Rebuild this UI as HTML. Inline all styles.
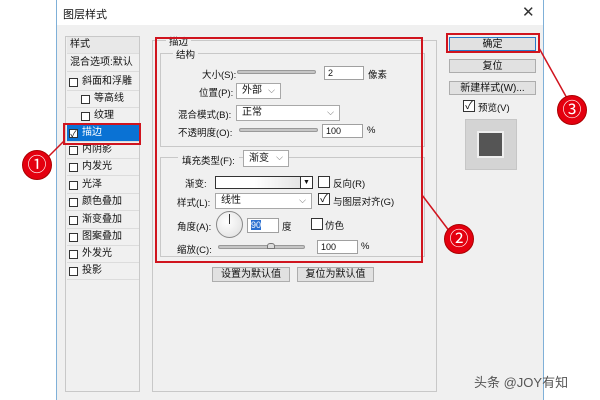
<!DOCTYPE html>
<html><head><meta charset="utf-8"><style>
*{box-sizing:border-box;margin:0;padding:0}
body{width:600px;height:400px;background:#fff;position:relative;overflow:hidden;font-family:"Liberation Sans","Noto Sans CJK SC",sans-serif;font-size:10px;color:#111}
.a{position:absolute}
.dlg{left:56px;top:0;width:488px;height:400px;background:#f0f0f0;border-left:1px solid #7fb0d8;border-right:1px solid #7fb0d8}
.tb{left:57px;top:0;width:486px;height:25px;background:#fff}
.box{position:absolute;border:1px solid #c8c8c8}
.inp{position:absolute;background:#fff;border:1px solid #a0a0a0;padding-left:3px;line-height:12px;font-size:9px}
.sel{position:absolute;background:#fff;border:1px solid #a8a8a8;padding-left:5px;font-size:10px}
.sel:after{content:"⌵";position:absolute;right:5px;top:-1px;color:#666;font-size:9px}
.btn{position:absolute;background:#e1e1e1;border:1px solid #adadad;text-align:center;font-size:10px;line-height:13px}
.cb{position:absolute;width:10px;height:10px;border:1px solid #333;background:#fff;font-size:9px;line-height:8px;text-align:center}
.li{position:absolute;left:67px;width:72px;height:17px;border-bottom:1px solid #dcdcdc;font-size:10px;line-height:16px}
.li .cb{left:2px;top:4px;width:9px;height:9px}
.lbl{position:absolute;font-size:9.5px;white-space:nowrap}
.sl{position:absolute;height:4px;background:#c6c6c6;border:1px solid #999;border-radius:2px}
.rb{position:absolute;border:2px solid #d0141e}
.circ{position:absolute;width:30px;height:30px;border-radius:50%;background:#e4000f;color:#fff;font-size:19px;text-align:center;line-height:29px;border:1px solid #a00}
</style></head><body>
<div class="a dlg"></div>
<div class="a tb"></div>
<div class="lbl" style="left:63px;top:6px;font-size:11px">图层样式</div>
<div class="lbl" style="left:522px;top:3px;font-size:15px;color:#333">✕</div>

<div class="box" style="left:65px;top:36px;width:75px;height:356px;background:#f0f0f0"></div>
<div class="li" style="top:37px;background:#e8e8e8;padding-left:3px">样式</div>
<div class="li" style="top:55px;padding-left:3px">混合选项:默认</div>
<div class="li" style="top:74px;padding-left:15px"><span class="cb"></span>斜面和浮雕</div>
<div class="li" style="top:91px;padding-left:27px"><span class="cb" style="left:14px"></span>等高线</div>
<div class="li" style="top:108px;padding-left:27px"><span class="cb" style="left:14px"></span>纹理</div>
<div class="li" style="top:125px;padding-left:15px;background:#0a72d4;color:#fff"><span class="cb" style="color:#111">✓</span>描边</div>
<div class="li" style="top:142px;padding-left:15px"><span class="cb"></span>内阴影</div>
<div class="li" style="top:159px;padding-left:15px"><span class="cb"></span>内发光</div>
<div class="li" style="top:177px;padding-left:15px"><span class="cb"></span>光泽</div>
<div class="li" style="top:194px;padding-left:15px"><span class="cb"></span>颜色叠加</div>
<div class="li" style="top:212px;padding-left:15px"><span class="cb"></span>渐变叠加</div>
<div class="li" style="top:229px;padding-left:15px"><span class="cb"></span>图案叠加</div>
<div class="li" style="top:246px;padding-left:15px"><span class="cb"></span>外发光</div>
<div class="li" style="top:263px;padding-left:15px"><span class="cb"></span>投影</div>

<div class="box" style="left:152px;top:40px;width:285px;height:352px"></div>
<div class="lbl" style="left:166px;top:34px;background:#f0f0f0;padding:0 3px">描边</div>
<div class="box" style="left:160px;top:53px;width:265px;height:94px"></div>
<div class="lbl" style="left:173px;top:47px;background:#f0f0f0;padding:0 3px">结构</div>
<div class="lbl" style="left:202px;top:67px">大小(S):</div>
<div class="sl" style="left:237px;top:70px;width:79px"></div>
<div class="inp" style="left:324px;top:66px;width:40px;height:14px">2</div>
<div class="lbl" style="left:368px;top:67px">像素</div>
<div class="lbl" style="left:199px;top:85px">位置(P):</div>
<div class="sel" style="left:236px;top:83px;width:45px;height:16px;line-height:14px">外部</div>
<div class="lbl" style="left:178px;top:107px">混合模式(B):</div>
<div class="sel" style="left:236px;top:105px;width:104px;height:16px;line-height:14px">正常</div>
<div class="lbl" style="left:178px;top:125px">不透明度(O):</div>
<div class="sl" style="left:239px;top:128px;width:79px"></div>
<div class="inp" style="left:322px;top:124px;width:41px;height:14px">100</div>
<div class="lbl" style="left:367px;top:125px">%</div>

<div class="box" style="left:160px;top:157px;width:265px;height:100px"></div>
<div class="lbl" style="left:178px;top:153px;background:#f0f0f0;padding:0 4px">填充类型(F):</div>
<div class="sel" style="left:243px;top:150px;width:46px;height:17px;line-height:15px">渐变</div>
<div class="lbl" style="left:185px;top:176px">渐变:</div>
<div class="a" style="left:215px;top:176px;width:98px;height:13px;border:1px solid #333;background:linear-gradient(90deg,#fff,#fff 40%,#ddd);"></div>
<div class="a" style="left:300px;top:177px;width:12px;height:11px;background:#fff;border-left:1px solid #333;font-size:7px;text-align:center;line-height:11px">▼</div>
<div class="cb" style="left:318px;top:176px;width:12px;height:12px"></div>
<div class="lbl" style="left:333px;top:176px">反向(R)</div>
<div class="lbl" style="left:177px;top:195px">样式(L):</div>
<div class="sel" style="left:215px;top:193px;width:97px;height:16px;line-height:14px">线性</div>
<div class="cb" style="left:318px;top:193px;width:12px;height:12px;font-size:11px;line-height:10px">✓</div>
<div class="lbl" style="left:333px;top:194px">与图层对齐(G)</div>
<div class="lbl" style="left:177px;top:219px">角度(A):</div>
<div class="a" style="left:216px;top:211px;width:27px;height:27px;border-radius:50%;border:1px solid #888;background:radial-gradient(circle at 40% 40%,#fff,#ddd)"></div>
<div class="a" style="left:229px;top:214px;width:1px;height:10px;background:#333"></div>
<div class="inp" style="left:247px;top:218px;width:32px;height:15px"><span style="background:#2a6fd0;color:#fff">90</span></div>
<div class="lbl" style="left:282px;top:219px">度</div>
<div class="cb" style="left:311px;top:218px;width:12px;height:12px"></div>
<div class="lbl" style="left:325px;top:218px">仿色</div>
<div class="lbl" style="left:177px;top:242px">缩放(C):</div>
<div class="sl" style="left:218px;top:245px;width:87px"></div>
<div class="a" style="left:267px;top:243px;width:8px;height:6px;border:1px solid #777;background:#ddd;border-radius:3px 3px 0 0"></div>
<div class="inp" style="left:317px;top:240px;width:41px;height:14px">100</div>
<div class="lbl" style="left:361px;top:241px">%</div>
<div class="btn" style="left:212px;top:267px;width:78px;height:15px">设置为默认值</div>
<div class="btn" style="left:297px;top:267px;width:77px;height:15px">复位为默认值</div>

<div class="btn" style="left:449px;top:37px;width:87px;height:14px;border:1px solid #2a7ac8">确定</div>
<div class="btn" style="left:449px;top:59px;width:87px;height:14px">复位</div>
<div class="btn" style="left:449px;top:81px;width:87px;height:14px">新建样式(W)...</div>
<div class="cb" style="left:463px;top:100px;width:12px;height:12px;font-size:11px;line-height:10px">✓</div>
<div class="lbl" style="left:478px;top:100px">预览(V)</div>
<div class="a" style="left:465px;top:119px;width:52px;height:51px;background:#d4d4d4;border:1px solid #c6c6c6"></div>
<div class="a" style="left:477px;top:131px;width:27px;height:27px;background:#555;border:2px solid #eee"></div>

<div class="rb" style="left:63px;top:123px;width:78px;height:22px"></div>
<div class="rb" style="left:155px;top:37px;width:268px;height:226px"></div>
<div class="rb" style="left:446px;top:33px;width:94px;height:20px"></div>
<svg class="a" style="left:0;top:0" width="600" height="400"><g stroke="#d0141e" stroke-width="1.5"><line x1="64" y1="141" x2="45" y2="160"/><line x1="422" y1="195" x2="450" y2="232"/><line x1="539" y1="48" x2="568" y2="100"/></g></svg>
<div class="circ" style="left:22px;top:150px">①</div>
<div class="circ" style="left:444px;top:224px">②</div>
<div class="circ" style="left:557px;top:95px">③</div>
<div class="lbl" style="left:474px;top:372px;font-size:13px;color:#555">头条 @JOY有知</div>
</body></html>
